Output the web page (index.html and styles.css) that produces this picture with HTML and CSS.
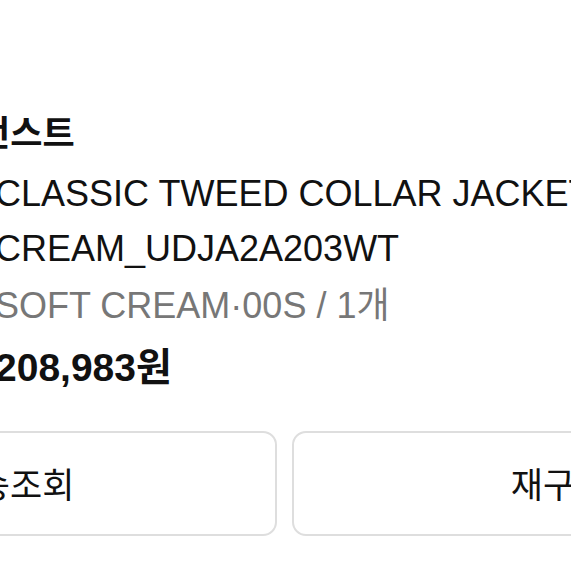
FILE: index.html
```html
<!DOCTYPE html>
<html lang="ko">
<head>
<meta charset="utf-8">
<title>주문 상품</title>
<link rel="stylesheet" href="styles.css">
</head>
<body>
<div class="page">
  <div class="item">
    <div class="thumb"></div>
    <div class="info">
      <div class="brand">언스트</div>
      <div class="title">CLASSIC TWEED COLLAR JACKET CREAM_UDJA2A203WT</div>
      <div class="option">SOFT CREAM·00S / 1개</div>
      <div class="price">208,983원</div>
    </div>
  </div>
  <div class="actions">
    <button class="btn">배송조회</button>
    <button class="btn">재구매</button>
  </div>
</div>
</body>
</html>
```

FILE: styles.css
```css
html, body {
  margin: 0;
  padding: 0;
  background: #fff;
  overflow: hidden;
}
body {
  width: 571px;
  height: 571px;
  font-family: "Liberation Sans", "Noto Sans CJK KR", sans-serif;
  color: #111;
}
.page {
  margin-left: -257px;
  width: 1083px;
  padding-top: 110px;
}
.item {
  display: flex;
  gap: 254px;
}
.thumb {
  width: 0;
  height: 0;
}
.info {
  width: 820px;
  margin-left: 2px;
}
.brand {
  font-family: "Noto Sans CJK KR", sans-serif;
  font-weight: 700;
  font-size: 35px;
  line-height: 42px;
  margin-left: -21px;
  color: #111;
}
.title {
  margin-top: 14px;
  font-size: 36px;
  line-height: 55px;
  margin-left: -4px;
}
.option {
  margin-top: 2px;
  font-size: 36px;
  line-height: 55px;
  color: #777;
  margin-left: -4px;
}
.price {
  margin-top: 7px;
  font-size: 39px;
  line-height: 55px;
  font-weight: 700;
  margin-left: -4px;
}
.actions {
  display: flex;
  gap: 15px;
  margin-top: 36px;
}
.btn {
  flex: 1;
  height: 105px;
  border: 2px solid #dedede;
  border-radius: 14px;
  background: #fff;
  font-family: "Noto Sans CJK KR", sans-serif;
  font-size: 35px;
  color: #111;
  display: flex;
  align-items: center;
  justify-content: center;
  padding: 0 0 3px;
}
```
